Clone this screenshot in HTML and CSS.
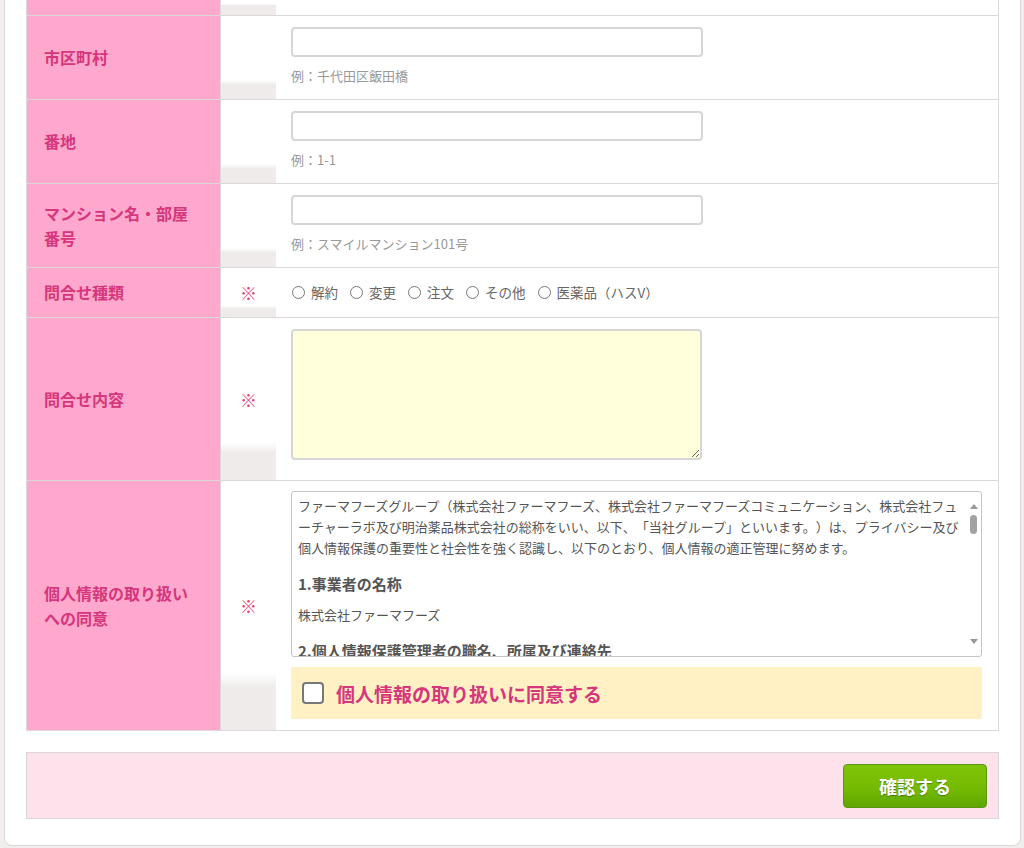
FILE: index.html
```html
<!DOCTYPE html>
<html lang="ja">
<head>
    <meta charset="UTF-8">
    <meta name="viewport" content="width=device-width, initial-scale=1.0">
    <title>お問い合わせ</title>
    <link rel="stylesheet" href="styles.css">
</head>
<body>
    <div class="contact-box">
        <div class="form-table">
            <!-- 都道府県の行の下端 -->
            <div class="form-row row-cut">
                <div class="form-label"></div>
                <div class="form-req"></div>
                <div class="form-field"></div>
            </div>

            <div class="form-row">
                <div class="form-label">市区町村</div>
                <div class="form-req"></div>
                <div class="form-field">
                    <input type="text" class="text-input">
                    <p class="hint">例：千代田区飯田橋</p>
                </div>
            </div>

            <div class="form-row">
                <div class="form-label">番地</div>
                <div class="form-req"></div>
                <div class="form-field">
                    <input type="text" class="text-input">
                    <p class="hint">例：1-1</p>
                </div>
            </div>

            <div class="form-row">
                <div class="form-label">マンション名・部屋番号</div>
                <div class="form-req"></div>
                <div class="form-field">
                    <input type="text" class="text-input">
                    <p class="hint">例：スマイルマンション101号</p>
                </div>
            </div>

            <div class="form-row">
                <div class="form-label">問合せ種類</div>
                <div class="form-req">※</div>
                <div class="form-field field-radio">
                    <label class="radio"><span class="radio-dot"></span>解約</label>
                    <label class="radio"><span class="radio-dot"></span>変更</label>
                    <label class="radio"><span class="radio-dot"></span>注文</label>
                    <label class="radio"><span class="radio-dot"></span>その他</label>
                    <label class="radio"><span class="radio-dot"></span>医薬品（ハスV）</label>
                </div>
            </div>

            <div class="form-row">
                <div class="form-label">問合せ内容</div>
                <div class="form-req">※</div>
                <div class="form-field field-textarea">
                    <textarea class="text-area"></textarea>
                </div>
            </div>

            <div class="form-row">
                <div class="form-label">個人情報の取り扱いへの同意</div>
                <div class="form-req">※</div>
                <div class="form-field field-policy">
                    <div class="policy-box">
                        <div class="policy-text">
                            <p>ファーマフーズグループ（株式会社ファーマフーズ、株式会社ファーマフーズコミュニケーション、株式会社フューチャーラボ及び明治薬品株式会社の総称をいい、以下、「当社グループ」といいます。）は、プライバシー及び個人情報保護の重要性と社会性を強く認識し、以下のとおり、個人情報の適正管理に努めます。</p>
                            <h4>1.事業者の名称</h4>
                            <p>株式会社ファーマフーズ</p>
                            <h4>2.個人情報保護管理者の職名、所属及び連絡先</h4>
                        </div>
                        <div class="policy-scroll">
                            <span class="arrow-up"></span>
                            <span class="thumb"></span>
                            <span class="arrow-down"></span>
                        </div>
                    </div>
                    <label class="agree">
                        <span class="check-box"></span>
                        <span class="agree-text">個人情報の取り扱いに同意する</span>
                    </label>
                </div>
            </div>
        </div>

        <div class="form-actions">
            <button class="btn-submit">確認する</button>
        </div>
    </div>
</body>
</html>
```

FILE: styles.css
```css
* {
    margin: 0;
    padding: 0;
    box-sizing: border-box;
}

body {
    background: #f1eded;
    font-family: "Noto Sans CJK JP", "Noto Sans", sans-serif;
    font-size: 13px;
    color: #555;
}

.contact-box {
    width: 1017px;
    margin-left: 4px;
    padding: 0 21px 26px;
    background: #fff;
    border: 1px solid #dcd6d6;
    border-top: none;
    border-radius: 0 0 8px 8px;
}

/* フォームの表 */
.form-table {
    border-left: 1px solid #dcd8d8;
    border-right: 1px solid #dcd8d8;
}

.form-row {
    display: grid;
    grid-template-columns: 194px 55px 1fr;
    border-bottom: 1px solid #dcd8d8;
}

.form-label {
    display: flex;
    align-items: center;
    padding: 0 24px 0 17px;
    background: #fea8cd;
    border-right: 1px solid #dcd8d8;
    color: #d5367c;
    font-size: 16px;
    font-weight: bold;
    line-height: 25px;
}

.form-req {
    display: flex;
    align-items: center;
    justify-content: center;
    background: linear-gradient(#fff 77%, #f0ebeb 83%);
    color: #e0427d;
    font-size: 17px;
    font-weight: bold;
}

.form-field {
    padding: 11px 16px 14px 15px;
}

.row-cut .form-label,
.row-cut .form-req,
.row-cut .form-field {
    height: 15px;
    padding: 0;
}

.row-cut .form-req {
    background: linear-gradient(#fff 25%, #f0ebeb 35%);
}

.text-input {
    display: block;
    width: 412px;
    height: 30px;
    border: 2px solid #d6d6d6;
    border-radius: 4px;
    background: #fff;
}

.hint {
    margin-top: 10px;
    font-size: 13px;
    line-height: 18px;
    color: #999;
}

/* ラジオボタン */
.field-radio {
    display: flex;
    align-items: center;
    gap: 12px;
    padding: 15px 16px 15px 16px;
    font-size: 13.5px;
    line-height: 19px;
    color: #666;
}

.radio {
    display: flex;
    align-items: center;
    gap: 6px;
}

.radio-dot {
    width: 13px;
    height: 13px;
    border: 1px solid #777;
    border-radius: 50%;
    background: #fff;
}

.field-textarea {
    padding: 11px 16px 20px 15px;
}

.text-area {
    display: block;
    width: 411px;
    height: 131px;
    background: #ffffdc;
    border: 2px solid #d6d6d6;
    border-radius: 4px;
}

/* 個人情報の取り扱い */
.field-policy {
    display: flex;
    flex-direction: column;
    gap: 10px;
    padding: 10px 16px 11px 15px;
}

.policy-box {
    display: flex;
    height: 166px;
    border: 1px solid #c4c4c4;
    border-radius: 3px;
    overflow: hidden;
}

.policy-text {
    width: 674px;
    padding: 3px 0 0 6px;
    overflow: hidden;
    line-height: 21px;
    line-break: loose;
    text-spacing-trim: space-all;
}

.policy-text h4 {
    margin: 15px 0 0;
    font-size: 15px;
    line-height: 21px;
}

.policy-text h4 + p {
    margin-top: 10px;
}

.policy-scroll {
    width: 15px;
    display: flex;
    flex-direction: column;
    align-items: center;
    padding: 12px 0;
}

.arrow-up,
.arrow-down {
    width: 0;
    height: 0;
    border-left: 4px solid transparent;
    border-right: 4px solid transparent;
}

.arrow-up {
    border-bottom: 5px solid #999;
}

.arrow-down {
    margin-top: auto;
    border-top: 5px solid #999;
}

.thumb {
    width: 7px;
    height: 19px;
    margin-top: 6px;
    border-radius: 4px;
    background: #a2a2a2;
}

.agree {
    display: flex;
    align-items: center;
    gap: 12px;
    height: 52px;
    padding-left: 11px;
    background: #fff1c3;
    color: #d5367c;
    font-size: 19px;
    font-weight: bold;
}

.check-box {
    width: 22px;
    height: 22px;
    border: 2px solid #777;
    border-radius: 4px;
    background: #fff;
}

/* 確認ボタン */
.form-actions {
    display: flex;
    justify-content: flex-end;
    margin-top: 21px;
    padding: 11px 11px 10px;
    background: #fde1eb;
    border: 1px solid #dcd5d8;
}

.btn-submit {
    width: 144px;
    height: 44px;
    border: 1px solid #5a9612;
    border-radius: 4px;
    background: linear-gradient(#80c408, #75bb04 55%, #5ea600);
    color: #fff;
    font-family: "Noto Sans CJK JP", sans-serif;
    font-size: 18px;
    font-weight: bold;
    text-shadow: 0 1px 1px rgba(0, 0, 0, 0.35);
}
```
